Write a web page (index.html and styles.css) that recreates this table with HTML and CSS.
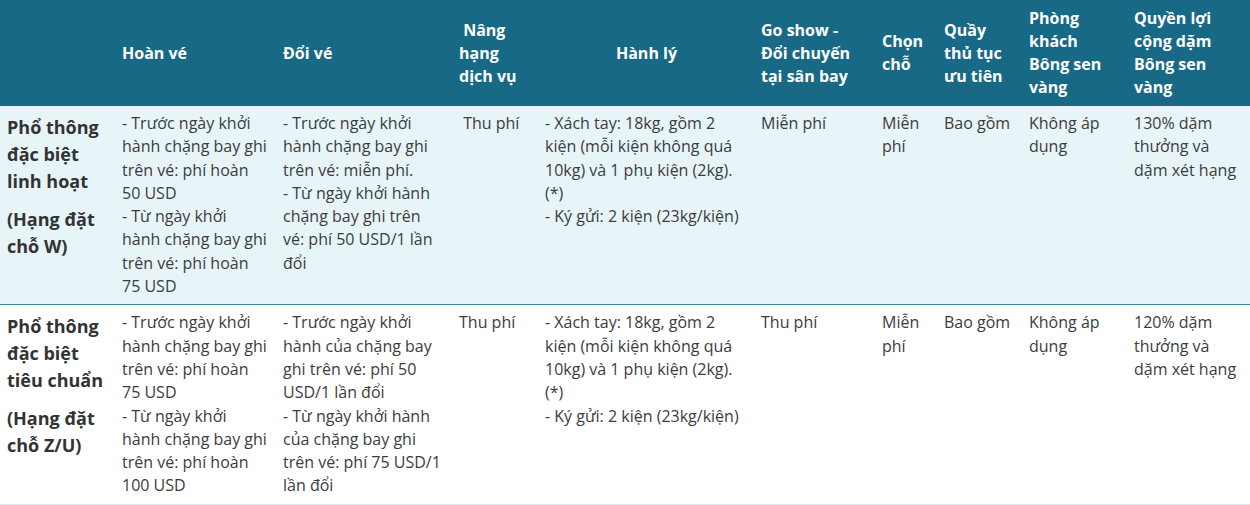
FILE: index.html
```html
<!DOCTYPE html>
<html lang="vi">
<head>
<meta charset="utf-8">
<title>Phổ thông đặc biệt</title>
<link rel="stylesheet" href="styles.css">
</head>
<body>
<table class="fare-table">
  <colgroup>
    <col class="c-label">
    <col class="c-refund">
    <col class="c-change">
    <col class="c-upgrade">
    <col class="c-bag">
    <col class="c-goshow">
    <col class="c-seat">
    <col class="c-counter">
    <col class="c-lounge">
    <col class="c-miles">
  </colgroup>
  <thead>
    <tr class="head-row">
      <th></th>
      <th class="refund">Hoàn vé</th>
      <th class="change">Đổi vé</th>
      <th>&nbsp;Nâng hạng dịch vụ</th>
      <th class="center">Hành lý</th>
      <th class="goshow">Go show - Đổi chuyến tại sân bay</th>
      <th>Chọn chỗ</th>
      <th>Quầy thủ tục ưu tiên</th>
      <th>Phòng khách Bông sen vàng</th>
      <th>Quyền lợi cộng dặm Bông sen vàng</th>
    </tr>
  </thead>
  <tbody>
    <tr class="row row-tint">
      <td class="label">
        <div class="label-name">Phổ thông đặc biệt linh hoạt</div>
        <div class="label-code">(Hạng đặt chỗ W)</div>
      </td>
      <td class="refund">- Trước ngày khởi hành chặng bay ghi trên vé: phí hoàn 50 USD<br>- Từ ngày khởi hành chặng bay ghi trên vé: phí hoàn 75 USD</td>
      <td class="change">- Trước ngày khởi hành chặng bay ghi trên vé: miễn phí.<br>- Từ ngày khởi hành chặng bay ghi trên vé: phí 50 USD/1 lần đổi</td>
      <td>&nbsp;Thu phí</td>
      <td>- Xách tay: 18kg, gồm 2 kiện (mỗi kiện không quá 10kg) và 1 phụ kiện (2kg).(*)<br>- Ký gửi: 2 kiện (23kg/kiện)</td>
      <td class="goshow">Miễn phí</td>
      <td>Miễn phí</td>
      <td>Bao gồm</td>
      <td>Không áp dụng</td>
      <td>130% dặm thưởng và dặm xét hạng</td>
    </tr>
    <tr class="row row-plain">
      <td class="label">
        <div class="label-name">Phổ thông đặc biệt tiêu chuẩn</div>
        <div class="label-code">(Hạng đặt chỗ Z/U)</div>
      </td>
      <td class="refund">- Trước ngày khởi hành chặng bay ghi trên vé: phí hoàn 75 USD<br>- Từ ngày khởi hành chặng bay ghi trên vé: phí hoàn 100 USD</td>
      <td class="change">- Trước ngày khởi hành của chặng bay ghi trên vé: phí 50 USD/1 lần đổi<br>- Từ ngày khởi hành của chặng bay ghi trên vé: phí 75 USD/1 lần đổi</td>
      <td>Thu phí</td>
      <td>- Xách tay: 18kg, gồm 2 kiện (mỗi kiện không quá 10kg) và 1 phụ kiện (2kg).(*)<br>- Ký gửi: 2 kiện (23kg/kiện)</td>
      <td class="goshow">Thu phí</td>
      <td>Miễn phí</td>
      <td>Bao gồm</td>
      <td>Không áp dụng</td>
      <td>120% dặm thưởng và dặm xét hạng</td>
    </tr>
  </tbody>
</table>
</body>
</html>
```

FILE: styles.css
```css
html, body {
  margin: 0;
  padding: 0;
  background: #ffffff;
}

body {
  font-family: "Open Sans", "Noto Sans", "DejaVu Sans", sans-serif;
  font-size: 16px;
  line-height: 23.3px;
  color: #3c3c3c;
}

.fare-table {
  width: 1250px;
  table-layout: fixed;
  border-collapse: collapse;
  border-spacing: 0;
}

.c-label { width: 115px; }
.c-refund { width: 161px; }
.c-change { width: 176px; }
.c-upgrade { width: 86px; }
.c-bag { width: 216px; }
.c-goshow { width: 121px; }
.c-seat { width: 62px; }
.c-counter { width: 85px; }
.c-lounge { width: 105px; }
.c-miles { width: 123px; }

.head-row {
  background: #186986;
}

.head-row th {
  color: #ffffff;
  font-weight: 700;
  line-height: 23px;
  text-align: left;
  vertical-align: middle;
  padding: 7px 6px 7px 7px;
  height: 92px;
}

.head-row th.center {
  text-align: center;
}

.row td {
  vertical-align: top;
  padding: 6px 6px 6px 7px;
}

.fare-table .refund {
  padding-right: 8px;
}

.fare-table .change {
  padding-right: 9px;
}

.fare-table .goshow {
  padding-right: 14px;
}

.row-tint {
  background: #e7f4f8;
  border-bottom: 1px solid #3a8d9c;
}

.row-plain {
  background: #ffffff;
  border-bottom: 1px solid #dce5e8;
}

.label {
  font-size: 18px;
  line-height: 27px;
  font-weight: 700;
  color: #333333;
}

.label-name {
  padding-top: 1.5px;
  margin-bottom: 11px;
}
```
